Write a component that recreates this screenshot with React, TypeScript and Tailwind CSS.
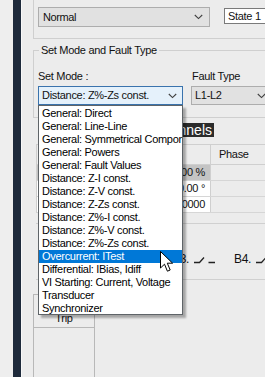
import React from "react";

const items = [
  "General: Direct",
  "General: Line-Line",
  "General: Symmetrical Components",
  "General: Powers",
  "General: Fault Values",
  "Distance: Z-I const.",
  "Distance: Z-V const.",
  "Distance: Z-Zs const.",
  "Distance: Z%-I const.",
  "Distance: Z%-V const.",
  "Distance: Z%-Zs const.",
  "Overcurrent: ITest",
  "Differential: IBias, Idiff",
  "VI Starting: Current, Voltage",
  "Transducer",
  "Synchronizer",
];

function Chevron() {
  return (
    <svg width="9" height="6" viewBox="0 0 9 6" className="shrink-0">
      <polyline points="0.8,1 4.5,4.6 8.2,1" fill="none" stroke="#404040" strokeWidth="1.1" />
    </svg>
  );
}

function Contact() {
  return (
    <svg width="22" height="8" viewBox="0 0 22 8" className="shrink-0">
      <path d="M0 6.5 H5.5 L10 1.5 M14.5 6.5 H21" fill="none" stroke="#222" strokeWidth="1.3" />
    </svg>
  );
}

export default function App() {
  return (
    <div className="relative w-[265px] h-[377px] overflow-hidden flex bg-[#ececec] font-['Liberation_Sans',Arial,sans-serif] text-[11px] tracking-[-0.3px] text-[#111]">
      <div className="w-[13px] shrink-0 bg-[#eeeeee]" />
      <div className="w-[8px] shrink-0 bg-[#1e2a3b]" />
      <div className="flex-1 flex flex-col border-l border-[#f8f8f8]">
        {/* top group */}
        <div className="ml-[11px] h-[39px] border-l border-b border-[#cfcfcf] flex flex-col">
          <div className="-mt-[10px] h-[11px] leading-[11px] pl-[7px] text-[#222] flex justify-between pr-[4px]">
            <span>Fault State</span>
            <span>Name</span>
          </div>
          <div className="mt-[6px] flex items-start">
            <div className="ml-[4px] w-[172px] h-[20px] bg-[#e1e1e1] border border-[#adadad] flex items-center justify-between pl-[4px] pr-[6px]">
              <span className="tracking-[-0.4px]">Normal</span>
              <Chevron />
            </div>
            <div className="ml-[14px] mt-[1px] w-[50px] h-[16px] bg-white border border-[#7a7a7a] flex items-center pl-[3px] whitespace-nowrap">
              State 1
            </div>
          </div>
        </div>

        {/* set mode group */}
        <div className="relative ml-[11px] mt-[11px] h-[68px] border-l border-t border-b border-[#cfcfcf] flex">
          <span className="absolute -top-[7px] left-[5px] px-[2px] bg-[#ececec] leading-[13px] whitespace-nowrap">
            Set Mode and Fault Type
          </span>
          <div className="ml-[4px] w-[145px] flex flex-col">
            <div className="mt-[19px] h-[12px] leading-[12px]">Set Mode :</div>
            <div className="mt-[4px] h-[19px] bg-[#e5f1fb] border border-[#3a73ad] flex items-center justify-between pl-[3px] pr-[5px] whitespace-nowrap">
              <span>Distance: Z%-Zs const.</span>
              <Chevron />
            </div>
          </div>
          <div className="ml-[8px] w-[80px] flex flex-col">
            <div className="mt-[19px] h-[12px] leading-[12px] ml-[1px] whitespace-nowrap">Fault Type</div>
            <div className="mt-[4px] h-[19px] bg-[#e1e1e1] border border-[#adadad] flex items-center justify-between pl-[3px] pr-[4px]">
              <span>L1-L2</span>
              <Chevron />
            </div>
          </div>
        </div>

        {/* channels */}
        <div className="mt-[5px] w-[192px] h-[14px] flex justify-end">
          <span className="bg-[#2b2b2b] text-white text-[14px] leading-[14px] tracking-[0px] px-[2px] whitespace-nowrap">
            Channels
          </span>
        </div>
        <div className="ml-[14px] mt-[7px] border-l border-t border-[#cfcfcf] flex flex-col">
          <div className="h-[20px] flex border-b border-[#cfcfcf]">
            <div className="w-[174px] border-r border-[#cfcfcf] flex items-center pl-[60px]">Magnitude</div>
            <div className="flex-1 flex items-center pl-[8px]">Phase</div>
          </div>
          {["100.00 %", "120.00 °", "50.0000"].map((v, i) => (
            <div key={i} className="h-[16px] flex border-b border-[#d6d6d6]">
              <div className={`w-[174px] border-r border-[#cfcfcf] flex items-center justify-end pr-[5px] ${i === 0 ? "bg-[#c4c4c4]" : "bg-white"}`}>
                {v}
              </div>
              <div className="flex-1 bg-[#ececec]" />
            </div>
          ))}
        </div>

        {/* binary outputs */}
        <div className="ml-[14px] mt-[10px] h-[57px] border-t border-b border-[#d0d0d0] flex items-center">
          <div className="flex ml-[12px] mt-[14px]">
            {["B1.", "B2.", "B3.", "B4."].map((b) => (
              <div key={b} className="w-[62px] flex items-center">
                <span className="text-[12px] leading-[12px]">{b}</span>
                <span className="ml-[5px] mt-[2px]">
                  <Contact />
                </span>
              </div>
            ))}
          </div>
        </div>

        {/* trip */}
        <div className="ml-[11px] mt-[14px] w-[62px] flex-1 border-l border-r border-t border-[#b8b8b8] flex flex-col">
          <div className="h-[33px] border-b border-[#b8b8b8] flex flex-col items-center justify-end pb-[3px] leading-[12px]">
            <span>Open</span>
            <span>Trip</span>
          </div>
        </div>
      </div>

      {/* dropdown list overlay */}
      <div className="absolute left-[38px] top-[105px] w-[145px] h-[210px] bg-white border border-[#5f6468] shadow-[3px_3px_2px_rgba(0,0,0,0.3)] pt-[1px] overflow-hidden">
        {items.map((t, i) => (
          <div
            key={t}
            className={`h-[13px] leading-[13px] pl-[3px] whitespace-nowrap ${i === 11 ? "bg-[#0078d7] text-white" : "text-black"}`}
          >
            {t}
          </div>
        ))}
      </div>

      {/* mouse cursor */}
      <svg className="absolute left-[160px] top-[251px]" width="14" height="22" viewBox="0 0 14 22">
        <path d="M0.5 0.5 L0.5 17 L4.5 13.2 L7.4 20.2 L10.2 19 L7.3 12.2 L12.6 12.2 Z" fill="white" stroke="black" strokeWidth="1" strokeLinejoin="miter" />
      </svg>
    </div>
  );
}
